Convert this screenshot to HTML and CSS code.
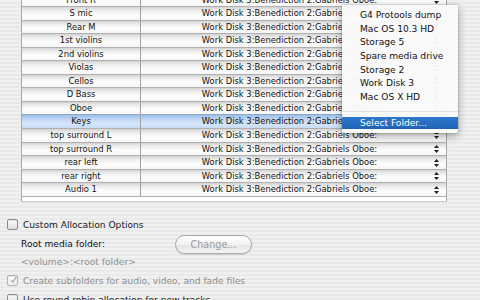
FILE: index.html
```html
<!DOCTYPE html>
<html>
<head>
<meta charset="utf-8">
<link rel="stylesheet" href="styles.css">
</head>
<body>
<div class="page">
  <div class="table">
    <div class="row"><div class="c1">Front R</div><div class="c2"><span>Work Disk 3:Benediction 2:Gabriels Oboe:</span><svg class="arr" width="5" height="8" viewBox="0 0 5 8"><path d="M2.5 0L5 3H0zM2.5 8L5 5H0z"/></svg></div></div>
    <div class="row"><div class="c1">S mic</div><div class="c2"><span>Work Disk 3:Benediction 2:Gabriels Oboe:</span><svg class="arr" width="5" height="8" viewBox="0 0 5 8"><path d="M2.5 0L5 3H0zM2.5 8L5 5H0z"/></svg></div></div>
    <div class="row"><div class="c1">Rear M</div><div class="c2"><span>Work Disk 3:Benediction 2:Gabriels Oboe:</span><svg class="arr" width="5" height="8" viewBox="0 0 5 8"><path d="M2.5 0L5 3H0zM2.5 8L5 5H0z"/></svg></div></div>
    <div class="row"><div class="c1">1st violins</div><div class="c2"><span>Work Disk 3:Benediction 2:Gabriels Oboe:</span><svg class="arr" width="5" height="8" viewBox="0 0 5 8"><path d="M2.5 0L5 3H0zM2.5 8L5 5H0z"/></svg></div></div>
    <div class="row"><div class="c1">2nd violins</div><div class="c2"><span>Work Disk 3:Benediction 2:Gabriels Oboe:</span><svg class="arr" width="5" height="8" viewBox="0 0 5 8"><path d="M2.5 0L5 3H0zM2.5 8L5 5H0z"/></svg></div></div>
    <div class="row"><div class="c1">Violas</div><div class="c2"><span>Work Disk 3:Benediction 2:Gabriels Oboe:</span><svg class="arr" width="5" height="8" viewBox="0 0 5 8"><path d="M2.5 0L5 3H0zM2.5 8L5 5H0z"/></svg></div></div>
    <div class="row"><div class="c1">Cellos</div><div class="c2"><span>Work Disk 3:Benediction 2:Gabriels Oboe:</span><svg class="arr" width="5" height="8" viewBox="0 0 5 8"><path d="M2.5 0L5 3H0zM2.5 8L5 5H0z"/></svg></div></div>
    <div class="row"><div class="c1">D Bass</div><div class="c2"><span>Work Disk 3:Benediction 2:Gabriels Oboe:</span><svg class="arr" width="5" height="8" viewBox="0 0 5 8"><path d="M2.5 0L5 3H0zM2.5 8L5 5H0z"/></svg></div></div>
    <div class="row"><div class="c1">Oboe</div><div class="c2"><span>Work Disk 3:Benediction 2:Gabriels Oboe:</span><svg class="arr" width="5" height="8" viewBox="0 0 5 8"><path d="M2.5 0L5 3H0zM2.5 8L5 5H0z"/></svg></div></div>
    <div class="row sel"><div class="c1">Keys</div><div class="c2"><span>Work Disk 3:Benediction 2:Gabriels Oboe:</span><svg class="arr" width="5" height="8" viewBox="0 0 5 8"><path d="M2.5 0L5 3H0zM2.5 8L5 5H0z"/></svg></div></div>
    <div class="row"><div class="c1">top surround L</div><div class="c2"><span>Work Disk 3:Benediction 2:Gabriels Oboe:</span><svg class="arr" width="5" height="8" viewBox="0 0 5 8"><path d="M2.5 0L5 3H0zM2.5 8L5 5H0z"/></svg></div></div>
    <div class="row"><div class="c1">top surround R</div><div class="c2"><span>Work Disk 3:Benediction 2:Gabriels Oboe:</span><svg class="arr" width="5" height="8" viewBox="0 0 5 8"><path d="M2.5 0L5 3H0zM2.5 8L5 5H0z"/></svg></div></div>
    <div class="row"><div class="c1">rear left</div><div class="c2"><span>Work Disk 3:Benediction 2:Gabriels Oboe:</span><svg class="arr" width="5" height="8" viewBox="0 0 5 8"><path d="M2.5 0L5 3H0zM2.5 8L5 5H0z"/></svg></div></div>
    <div class="row"><div class="c1">rear right</div><div class="c2"><span>Work Disk 3:Benediction 2:Gabriels Oboe:</span><svg class="arr" width="5" height="8" viewBox="0 0 5 8"><path d="M2.5 0L5 3H0zM2.5 8L5 5H0z"/></svg></div></div>
    <div class="row"><div class="c1">Audio 1</div><div class="c2"><span>Work Disk 3:Benediction 2:Gabriels Oboe:</span><svg class="arr" width="5" height="8" viewBox="0 0 5 8"><path d="M2.5 0L5 3H0zM2.5 8L5 5H0z"/></svg></div></div>
    <div class="tail"></div>
  </div>

  <div class="options">
    <div class="opt"><span class="cb"></span><span>Custom Allocation Options</span></div>
    <div class="root"><span class="label">Root media folder:</span><span class="btn">Change...</span></div>
    <div class="path">&lt;volume&gt;:&lt;root folder&gt;</div>
    <div class="opt dim"><span class="cb on"><svg width="10" height="10" viewBox="0 0 10 10"><path d="M1.5 5.2L4 8.2L9 0.5" fill="none" stroke="#8a8a8a" stroke-width="1.4"/></svg></span><span>Create subfolders for audio, video, and fade files</span></div>
    <div class="opt last"><span class="cb"></span><span>Use round robin allocation for new tracks</span></div>
  </div>

  <div class="menu">
    <div class="mi">G4 Protools dump</div>
    <div class="mi">Mac OS 10.3 HD</div>
    <div class="mi">Storage 5</div>
    <div class="mi">Spare media drive</div>
    <div class="mi">Storage 2</div>
    <div class="mi">Work Disk 3</div>
    <div class="mi">Mac OS X HD</div>
    <div class="msep"></div>
    <div class="mi hl">Select Folder...</div>
  </div>
</div>
</body>
</html>
```

FILE: styles.css
```css
html, body {
  margin: 0;
  padding: 0;
}
body {
  width: 480px;
  height: 300px;
  overflow: hidden;
  font-family: "DejaVu Sans", Verdana, sans-serif;
  font-size: 9.1px;
  color: #1a1a1a;
  background: repeating-linear-gradient(#f0f0f0 0 2px, #e9e9e9 2px 4px);
}
.page {
  position: relative;
  display: flow-root;
  width: 480px;
  height: 300px;
}
.table {
  margin-left: 21px;
  width: 426px;
  margin-top: -7.5px;
  background: #fff;
  border-left: 1px solid #a8a8a8;
  border-right: 1px solid #a8a8a8;
  border-bottom: 1px solid #c8c8c8;
  box-sizing: border-box;
  font-size: 8.4px;
}
.row {
  display: grid;
  grid-template-columns: 119px 1fr;
  height: 13.55px;
  box-sizing: border-box;
  border-top: 1px solid #b0b0b0;
  background: linear-gradient(#d2d2d2, #ececec 25%, #fdfdfd 60%, #f6f6f6);
}
.row.sel {
  background: linear-gradient(#9ebfe6, #bcd5f2 30%, #d6e6f8 65%, #c6dcf4);
  color: #0c1a30;
  border-top-color: #8aa8cc;
}
.c1 {
  text-align: center;
  line-height: 12.5px;
  border-right: 1px solid #a0a0a0;
  white-space: nowrap;
  color: #111;
}
.c2 {
  display: flex;
  align-items: center;
  justify-content: center;
  padding-right: 8px;
  position: relative;
  white-space: nowrap;
  line-height: 12.5px;
  color: #111;
}
.arr {
  position: absolute;
  right: 7px;
  top: 2.5px;
  fill: #222;
}
.tail {
  height: 4px;
  border-top: 1px solid #b0b0b0;
  background: #fff;
}
.options {
  display: flex;
  flex-direction: column;
  padding-top: 16px;
}
.opt {
  display: flex;
  align-items: center;
  gap: 5px;
  padding-left: 7px;
  height: 14px;
}
.cb {
  width: 11px;
  height: 11px;
  box-sizing: border-box;
  border: 1px solid #8c8c8c;
  border-radius: 2px;
  background: linear-gradient(#fafafa, #dedede);
  display: inline-flex;
  align-items: center;
  justify-content: center;
  box-shadow: inset 0 1px 1px rgba(0,0,0,0.1);
}
.cb.on {
  border-color: #b4b4b4;
  background: linear-gradient(#fcfcfc, #ececec);
}
.cb.on svg {
  margin-top: -2px;
  margin-left: 2px;
}
.root {
  display: flex;
  align-items: center;
  margin-top: 3px;
  padding-left: 21px;
  height: 19px;
}
.label {
  width: 154px;
  color: #111;
}
.btn {
  width: 77px;
  height: 19px;
  box-sizing: border-box;
  border: 1px solid #a8a8a8;
  border-radius: 10px;
  background: linear-gradient(#ffffff, #f2f2f2 50%, #e4e4e4 51%, #f4f4f4);
  color: #9a9a9a;
  display: flex;
  align-items: center;
  justify-content: center;
  font-size: 9.6px;
  box-shadow: 0 1px 1px rgba(0,0,0,0.12);
}
.path {
  padding-left: 21px;
  color: #8e8e8e;
  margin-top: 2px;
  height: 12px;
  line-height: 12px;
}
.opt.dim {
  margin-top: 6px;
  color: #8e8e8e;
}
.opt.last {
  margin-top: 5px;
}
.menu {
  position: absolute;
  left: 342px;
  top: 5px;
  width: 116px;
  padding: 4px 0 4px 0;
  background: rgba(250, 250, 250, 0.97);
  box-shadow: 0 3px 8px rgba(0, 0, 0, 0.35), 0 0 0 1px rgba(0,0,0,0.08);
  border-radius: 0 0 3px 3px;
}
.mi {
  height: 13.67px;
  line-height: 13.67px;
  padding-left: 18px;
  white-space: nowrap;
  color: #111;
}
.msep {
  height: 12px;
  position: relative;
}
.msep::after {
  content: "";
  position: absolute;
  left: 0;
  right: 0;
  top: 6px;
  height: 1px;
  background: #e2e2e2;
}
.mi.hl {
  height: 12px;
  line-height: 12px;
  background: linear-gradient(#2f78cc, #1e63b6);
  color: #fff;
}
```
